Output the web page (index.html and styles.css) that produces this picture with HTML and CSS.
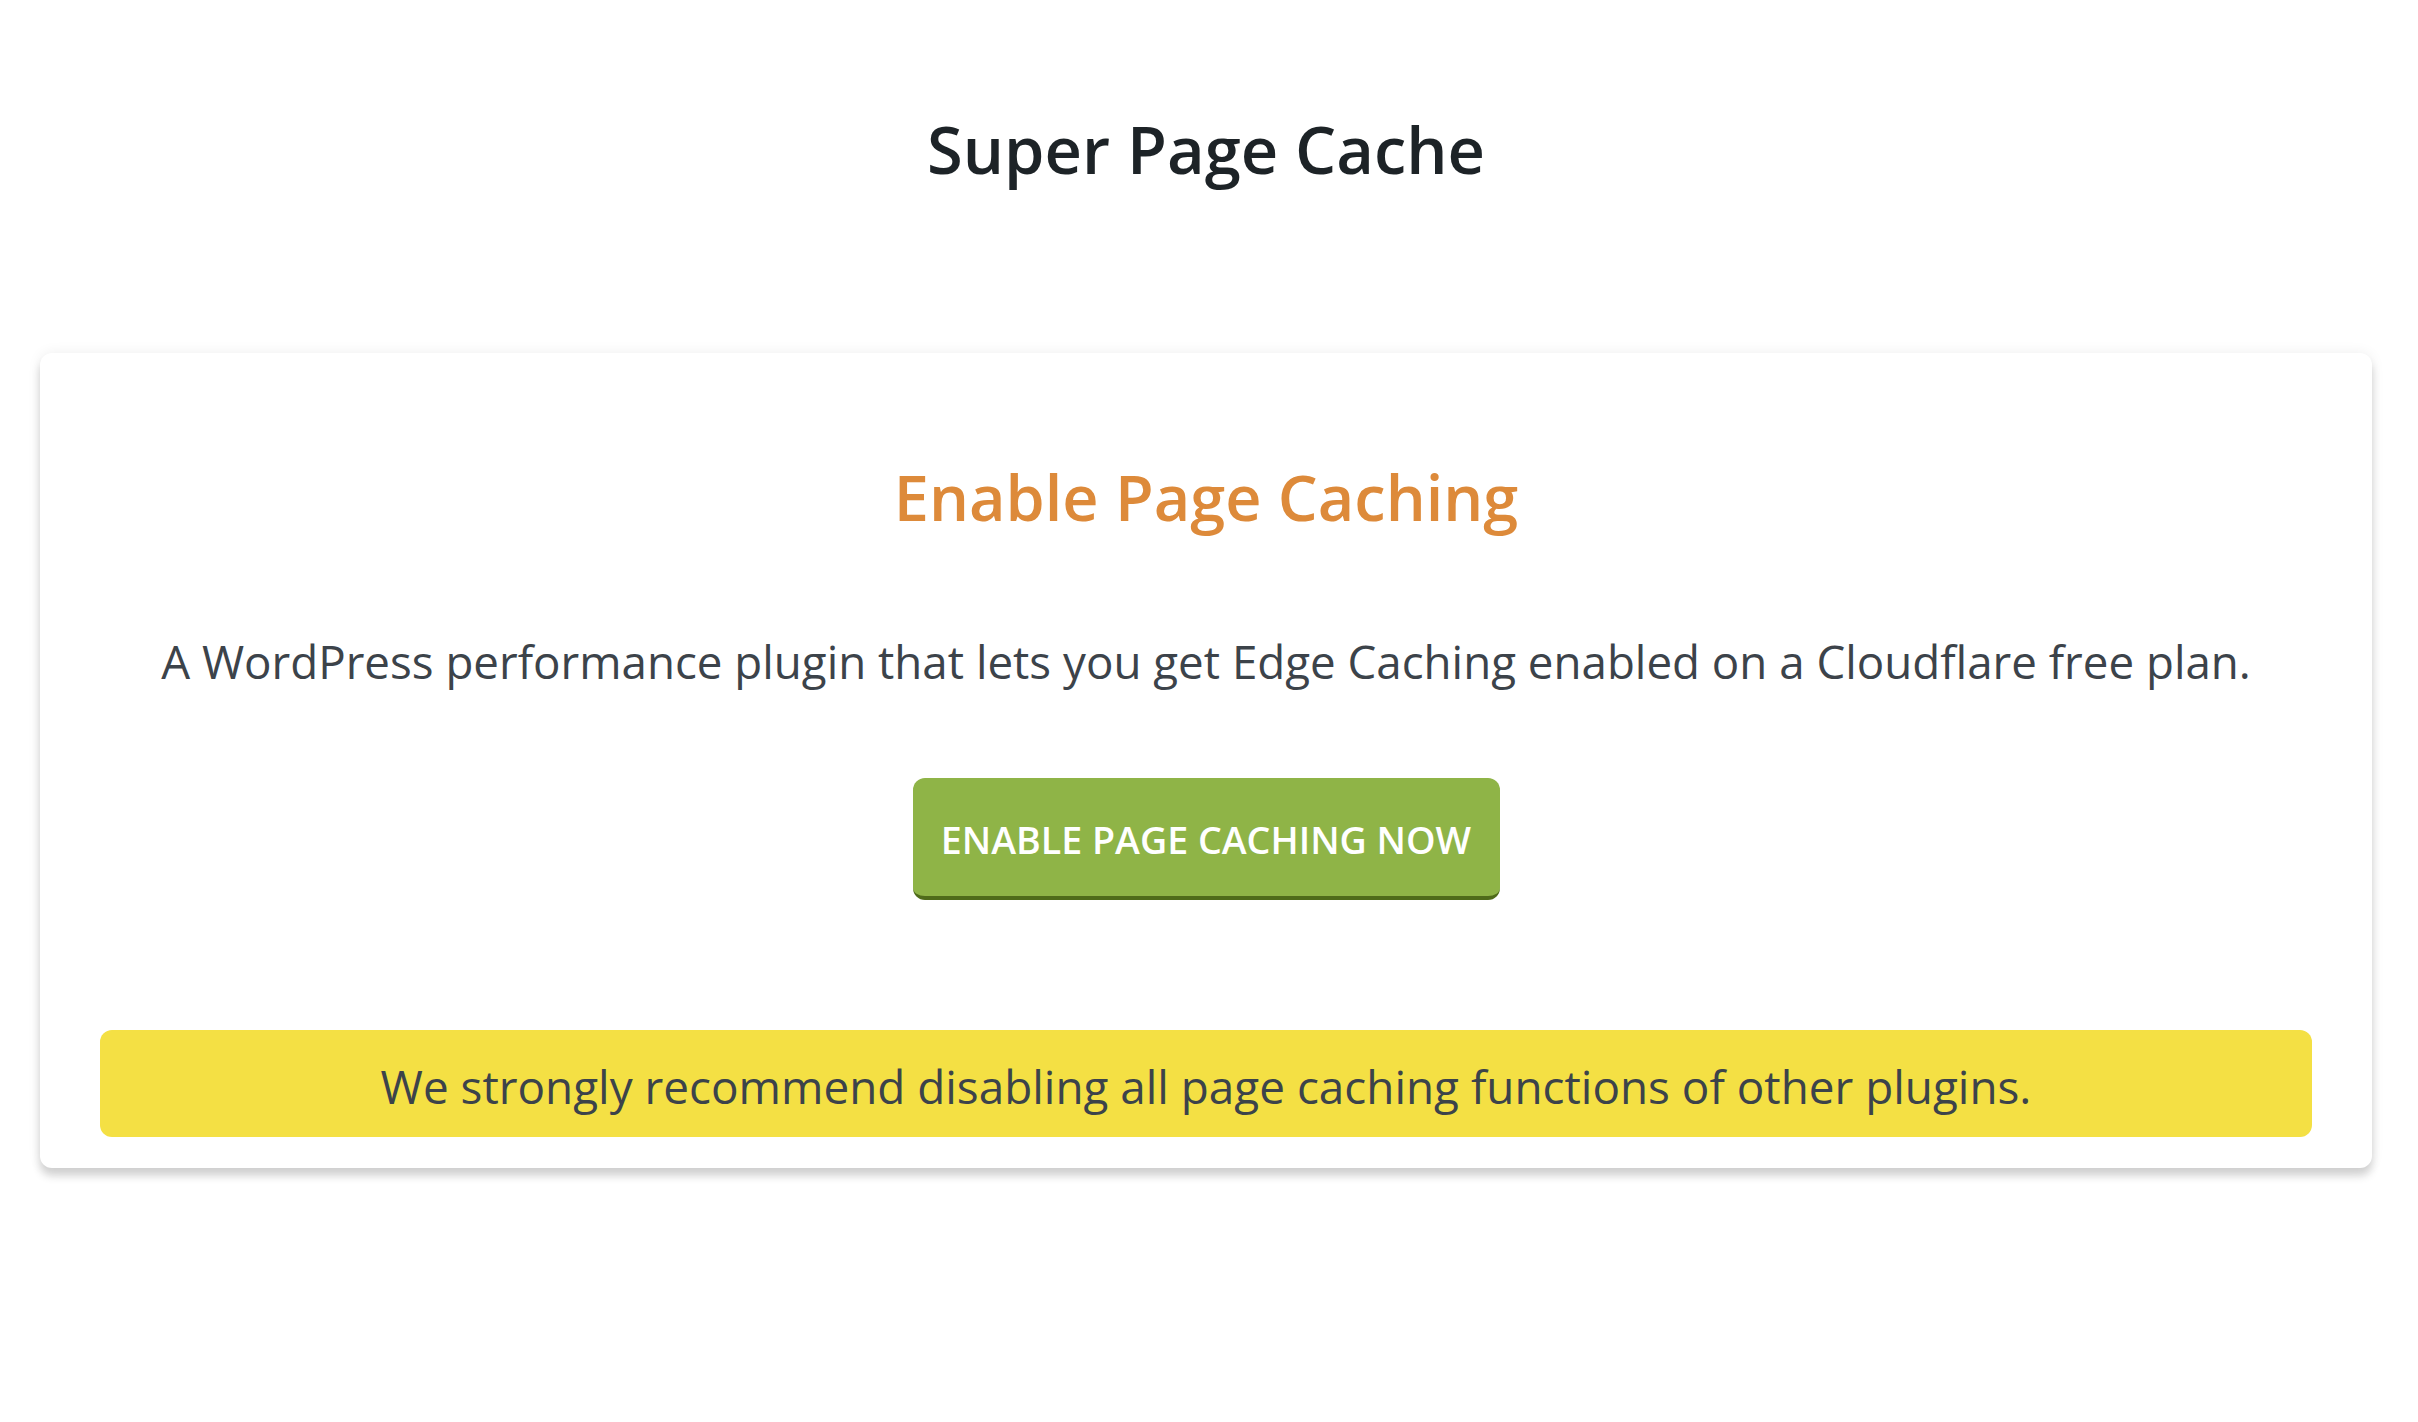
FILE: index.html
```html
<!DOCTYPE html>
<html lang="en">
<head>
<meta charset="utf-8">
<title>Super Page Cache</title>
<link rel="stylesheet" href="styles.css">
</head>
<body>
<div class="page">
  <h1 class="page-title">Super Page Cache</h1>
  <div class="card">
    <h2 class="card-title">Enable Page Caching</h2>
    <p class="card-desc">A WordPress performance plugin that lets you get Edge Caching enabled on a Cloudflare free plan.</p>
    <div class="actions">
      <button class="btn-enable" type="button">ENABLE PAGE CACHING NOW</button>
    </div>
    <div class="notice">We strongly recommend disabling all page caching functions of other plugins.</div>
  </div>
</div>
</body>
</html>
```

FILE: styles.css
```css
html, body {
  margin: 0;
  padding: 0;
  background: #ffffff;
}
body {
  font-family: "Segoe UI", "Open Sans", "Noto Sans", sans-serif;
  color: #3c434a;
}
.page {
  padding: 0 46px 200px 40px;
}
.page-title {
  margin: 0;
  padding-top: 107px;
  font-size: 65px;
  line-height: 84px;
  font-weight: 600;
  color: #1d2327;
  text-align: center;
}
.card {
  margin-top: 162px;
  background: #fff;
  border-radius: 12px;
  box-shadow: 0 8px 9px rgba(0, 0, 0, 0.16), 0 0 14px rgba(0, 0, 0, 0.07);
  padding: 104px 60px 31px;
  text-align: center;
}
.card-title {
  margin: 0;
  font-size: 63px;
  line-height: 80px;
  font-weight: 600;
  color: #dd8a3a;
}
.card-desc {
  margin: 92px 0 0;
  font-size: 45.7px;
  line-height: 64px;
}
.actions {
  margin-top: 85px;
}
.btn-enable {
  font-family: inherit;
  font-size: 37.6px;
  font-weight: 600;
  white-space: nowrap;
  color: #fff;
  background: #8fb447;
  border: none;
  border-bottom: 4px solid #4f6b1a;
  border-radius: 12px;
  width: 587px;
  height: 122px;
  padding: 5px 0 0;
  cursor: pointer;
}
.notice {
  margin-top: 130px;
  background: #f4e044;
  border-radius: 12px;
  height: 107px;
  box-sizing: border-box;
  padding-top: 5px;
  line-height: 102px;
  font-size: 45.85px;
  color: #3c434a;
}
```
